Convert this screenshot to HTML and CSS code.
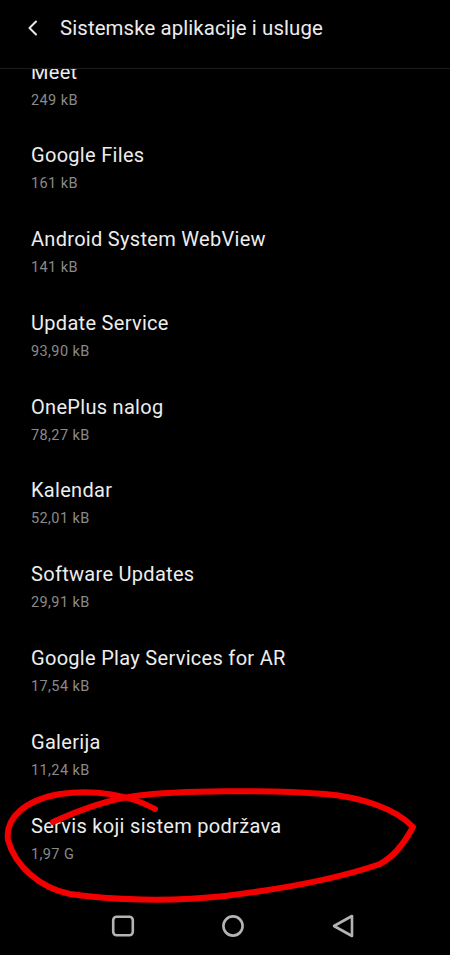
FILE: index.html
```html
<!DOCTYPE html>
<html lang="sr">
<head>
<meta charset="utf-8">
<title>Sistemske aplikacije i usluge</title>
<link rel="stylesheet" href="styles.css">
</head>
<body>
<div class="screen">
  <header class="topbar">
    <svg class="back" width="12" height="16" viewBox="0 0 12 16"><path d="M9 1.5 L2.5 8 L9 14.5" fill="none" stroke="#e8e8e8" stroke-width="2" stroke-linecap="round" stroke-linejoin="round"/></svg>
    <h1 class="title">Sistemske aplikacije i usluge</h1>
  </header>
  <main class="list">
    <div class="list-inner">
      <div class="item"><div class="name">Meet</div><div class="size">249 kB</div></div>
      <div class="item"><div class="name">Google Files</div><div class="size">161 kB</div></div>
      <div class="item"><div class="name">Android System WebView</div><div class="size">141 kB</div></div>
      <div class="item"><div class="name">Update Service</div><div class="size">93,90 kB</div></div>
      <div class="item"><div class="name">OnePlus nalog</div><div class="size">78,27 kB</div></div>
      <div class="item"><div class="name">Kalendar</div><div class="size">52,01 kB</div></div>
      <div class="item"><div class="name">Software Updates</div><div class="size">29,91 kB</div></div>
      <div class="item"><div class="name">Google Play Services for AR</div><div class="size">17,54 kB</div></div>
      <div class="item"><div class="name">Galerija</div><div class="size">11,24 kB</div></div>
      <div class="item"><div class="name">Servis koji sistem podržava</div><div class="size">1,97 G</div></div>
    </div>
  </main>
  <nav class="navbar">
    <svg width="24" height="24" viewBox="0 0 24 24"><rect x="2.2" y="2.7" width="19.6" height="18.6" rx="3.5" fill="none" stroke="#b4b4b4" stroke-width="2.6"/></svg>
    <svg width="24" height="24" viewBox="0 0 24 24"><circle cx="12" cy="12" r="9.6" fill="none" stroke="#b4b4b4" stroke-width="2.6"/></svg>
    <svg width="24" height="24" viewBox="0 0 24 24"><path d="M21 2 L21 22 L3 12 Z" fill="none" stroke="#b4b4b4" stroke-width="2.6" stroke-linejoin="round"/></svg>
  </nav>
  <svg class="scribble" width="450" height="955" viewBox="0 0 450 955">
    <path d="M53,822 C75,812 105,800 135,796 C180,790 270,790 325,794 C360,797 395,808 413,827 C405,842 395,856 380,864 C340,878 290,888 225,896 C170,902 110,900 70,894 C40,888 15,866 8,840 C5,818 25,800 60,794 C95,789 130,795 155,809" fill="none" stroke="#f20000" stroke-width="6" stroke-linecap="round" stroke-linejoin="round"/>
  </svg>
</div>
</body>
</html>
```
FILE: styles.css
```css
html, body {
  margin: 0;
  padding: 0;
  background: #000;
}
.screen {
  position: relative;
  width: 450px;
  height: 955px;
  display: flex;
  flex-direction: column;
  overflow: hidden;
  font-family: Roboto, "Noto Sans", "Liberation Sans", sans-serif;
  background: #000;
}
.topbar {
  height: 68px;
  flex: 0 0 auto;
  display: flex;
  align-items: flex-start;
  border-bottom: 1px solid #1c1c1c;
  box-sizing: content-box;
}
.back {
  margin-left: 27px;
  margin-top: 20px;
  flex: 0 0 auto;
}
.title {
  margin: 14px 0 0 21px;
  font-size: 20.4px;
  font-weight: 400;
  line-height: 28px;
  color: #ececec;
  letter-spacing: 0.1px;
}
.list {
  flex: 1 1 auto;
  overflow: hidden;
}
.list-inner {
  margin-top: -26px;
}
.item {
  height: 83.8px;
  box-sizing: border-box;
  padding: 15.5px 0 0 31px;
}
.name {
  font-size: 20px;
  line-height: 26px;
  letter-spacing: 0.3px;
  color: #ededed;
}
.size {
  margin-top: 6px;
  font-size: 14.5px;
  line-height: 20px;
  letter-spacing: 0.4px;
  color: #8a8a8a;
}
.navbar {
  flex: 0 0 auto;
  height: 56px;
  display: flex;
  justify-content: center;
  align-items: center;
  gap: 86px;
  padding: 0 0 3px 15px;
  box-sizing: border-box;
}
.scribble {
  position: absolute;
  left: 0;
  top: 0;
  pointer-events: none;
}
```
